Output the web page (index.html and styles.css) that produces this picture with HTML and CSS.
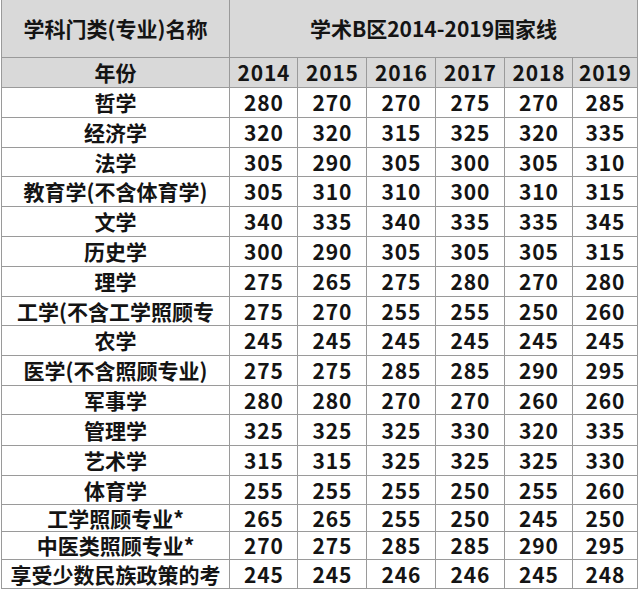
FILE: index.html
```html
<!DOCTYPE html>
<html lang="zh">
<head>
<meta charset="utf-8">
<title>学术B区2014-2019国家线</title>
<link rel="stylesheet" href="styles.css">
</head>
<body>
<div class="sheet">
  <div class="cell head name">学科门类(专业)名称</div>
  <div class="cell head title">学术B区2014-2019国家线</div>

  <div class="cell head label">年份</div>
  <div class="cell head">2014</div><div class="cell head">2015</div><div class="cell head">2016</div><div class="cell head">2017</div><div class="cell head">2018</div><div class="cell head">2019</div>

  <div class="cell label">哲学</div><div class="cell">280</div><div class="cell">270</div><div class="cell">270</div><div class="cell">275</div><div class="cell">270</div><div class="cell">285</div>
  <div class="cell label">经济学</div><div class="cell">320</div><div class="cell">320</div><div class="cell">315</div><div class="cell">325</div><div class="cell">320</div><div class="cell">335</div>
  <div class="cell label">法学</div><div class="cell">305</div><div class="cell">290</div><div class="cell">305</div><div class="cell">300</div><div class="cell">305</div><div class="cell">310</div>
  <div class="cell label">教育学(不含体育学)</div><div class="cell">305</div><div class="cell">310</div><div class="cell">310</div><div class="cell">300</div><div class="cell">310</div><div class="cell">315</div>
  <div class="cell label">文学</div><div class="cell">340</div><div class="cell">335</div><div class="cell">340</div><div class="cell">335</div><div class="cell">335</div><div class="cell">345</div>
  <div class="cell label">历史学</div><div class="cell">300</div><div class="cell">290</div><div class="cell">305</div><div class="cell">305</div><div class="cell">305</div><div class="cell">315</div>
  <div class="cell label">理学</div><div class="cell">275</div><div class="cell">265</div><div class="cell">275</div><div class="cell">280</div><div class="cell">270</div><div class="cell">280</div>
  <div class="cell label">工学(不含工学照顾专</div><div class="cell">275</div><div class="cell">270</div><div class="cell">255</div><div class="cell">255</div><div class="cell">250</div><div class="cell">260</div>
  <div class="cell label">农学</div><div class="cell">245</div><div class="cell">245</div><div class="cell">245</div><div class="cell">245</div><div class="cell">245</div><div class="cell">245</div>
  <div class="cell label">医学(不含照顾专业)</div><div class="cell">275</div><div class="cell">275</div><div class="cell">285</div><div class="cell">285</div><div class="cell">290</div><div class="cell">295</div>
  <div class="cell label">军事学</div><div class="cell">280</div><div class="cell">280</div><div class="cell">270</div><div class="cell">270</div><div class="cell">260</div><div class="cell">260</div>
  <div class="cell label">管理学</div><div class="cell">325</div><div class="cell">325</div><div class="cell">325</div><div class="cell">330</div><div class="cell">320</div><div class="cell">335</div>
  <div class="cell label">艺术学</div><div class="cell">315</div><div class="cell">315</div><div class="cell">325</div><div class="cell">325</div><div class="cell">325</div><div class="cell">330</div>
  <div class="cell label">体育学</div><div class="cell">255</div><div class="cell">255</div><div class="cell">255</div><div class="cell">250</div><div class="cell">255</div><div class="cell">260</div>
  <div class="cell label">工学照顾专业*</div><div class="cell">265</div><div class="cell">265</div><div class="cell">255</div><div class="cell">250</div><div class="cell">245</div><div class="cell">250</div>
  <div class="cell label">中医类照顾专业*</div><div class="cell">270</div><div class="cell">275</div><div class="cell">285</div><div class="cell">285</div><div class="cell">290</div><div class="cell">295</div>
  <div class="cell label">享受少数民族政策的考</div><div class="cell">245</div><div class="cell">245</div><div class="cell">246</div><div class="cell">246</div><div class="cell">245</div><div class="cell">248</div>
</div>
</body>
</html>
```

FILE: styles.css
```css
html, body {
  margin: 0;
  padding: 0;
  background: #ffffff;
}

.sheet {
  display: grid;
  grid-template-columns: 227px 67px 68px 68px 68px 67px 64px;
  grid-template-rows: 57px 29px 29px 29px 28px 29px 29px 29px 29px 28px 29px 29px 28px 30px 29px 28px 26px 27px 28px;
  gap: 1px;
  width: max-content;
  margin-left: 1px;
  padding: 0 1px 1px 1px;
  background: #9a9a9a;
  font-family: "Noto Sans CJK SC", "Noto Sans", sans-serif;
  font-weight: 700;
  font-size: 21px;
  color: #141414;
}

.cell {
  display: flex;
  align-items: center;
  justify-content: center;
  background: #ffffff;
  white-space: nowrap;
  line-height: 1;
  letter-spacing: 0.8px;
  padding-left: 0.8px;
}

.label,
.name,
.title {
  letter-spacing: 0;
  padding-left: 0;
}

.head {
  background: #d9d9d9;
}

.title {
  grid-column: 2 / span 6;
}
```
